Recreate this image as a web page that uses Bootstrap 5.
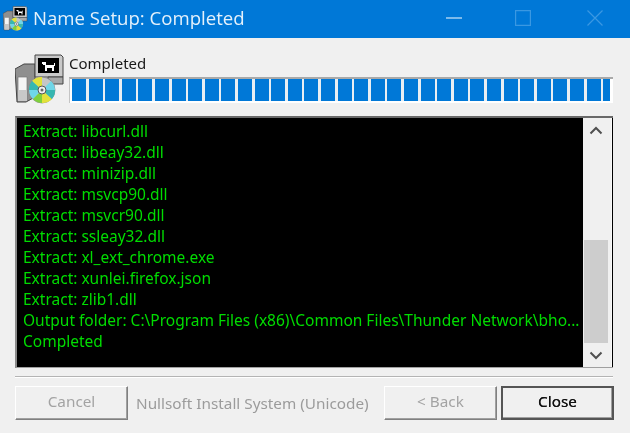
<!DOCTYPE html>
<html lang="en"><head><meta charset="utf-8"><title>Name Setup: Completed</title>
<link href="https://cdn.jsdelivr.net/npm/bootstrap@5.3.0/dist/css/bootstrap.min.css" rel="stylesheet">
<style>
html,body{width:630px;height:433px;overflow:hidden;background:#f0f0f0}
body{font-family:"Noto Sans","Liberation Sans",sans-serif;font-size:15px;color:#1a1a1a;filter:blur(.3px)}
.tbar{height:38px;background:#0078d7;color:#e4f1fb;padding-left:3px;padding-bottom:2px}
.tbar-ico{width:25px;height:26px;margin-right:5px}
.tbar-title{font-family:"Open Sans",sans-serif;font-size:18.6px}
.wctl{width:16px;height:16px;display:block}
.wctl-min{margin-right:53px}.wctl-max{margin-right:56px}.wctl-close{margin-right:27px}
.dlg{padding:14px 16px 0 15px}
.setup-ico{width:50px;height:52px;margin-right:4px;flex:none}
.stat{line-height:20px;padding-top:1px;font-size:15px;height:22px}
.pbar{height:26px;margin:3px 0 0 0;width:544px;background:#fff;border-top:2px solid #a9a9a9;border-left:1px solid #c4c4c4;padding:0 3px 2px 2px}
.pfill{height:100%;background:repeating-linear-gradient(90deg,#0078d7 0,#0078d7 14px,#e8eef3 14px,#e8eef3 16.6px)}
.logbox{height:252px;margin-top:12px;width:598px;border-top:2px solid #696969;border-left:2px solid #8a8a8a;border-bottom:1px solid #a0a0a0;background:#000}
.loglines{width:566px;background:#000;color:#00dc00;padding:3px 0 0 6px;font-size:15.500px;line-height:21px;white-space:nowrap;overflow:hidden}
.sbar{width:29px;background:#f0f0f0;border-right:1px solid #fafafa;padding:0 3px 0 1px}
.sb-btn{height:24px;display:flex;align-items:center;justify-content:center}
.sb-track{flex:1;padding-top:98px}
.sb-thumb{height:100%;background:#cdcdcd}
.sep{height:2px;margin:8px 1px 0 0;width:598px;background:#b4b4b4;border-bottom:1px solid #fff}
.foot{margin-top:8px;width:599px}
.nbtn{width:113px;height:34px;padding:0 0 3px;font-size:15.300px;font-family:inherit;color:#111;background:#f0f0f0;border:1px solid;border-color:#fff #6e6e6e #6e6e6e #fff;border-radius:0;box-shadow:inset -1px -1px 0 #a0a0a0}
.nbtn:disabled,.nbtn.disabled{color:#a3a3a3;background:#f0f0f0;border-color:#fff #808080 #808080 #fff;opacity:1}
.nbtn-def{border:2px solid;border-color:#555;color:#111;text-shadow:0 0 .4px #111}
.brand{color:#9b9b9b;font-size:15.300px;padding-left:8px;white-space:nowrap;flex:1}
.nbtn-gap{margin-left:4px}
</style></head><body>
<svg width="0" height="0" class="position-absolute">
<symbol id="inst" viewBox="15 50 50 52">
<path d="M15 67l9-5h11v33l-9 5H17z" fill="#8f8f8f" stroke="#444"/>
<path d="M18 75h9v24h-9z" fill="#f4f4f4" stroke="#777" stroke-width=".7"/>
<path d="M18 88h9v11h-9z" fill="#c8c8c8"/>
<path d="M35 53h26l2 2v20h-28z" fill="#c9c9c9" stroke="#444"/>
<path d="M38 56h21v15H38z" fill="#000"/>
<path d="M42 60h4v3h8v6h-2v-3h-5v3h-2v-6h-2v-1h-1z" fill="#fff"/>
<path d="M54 61h1v3h-1z" fill="#fff"/>
<path d="M48 75h15v7H48z" fill="#a8a8a8" stroke="#444"/>
<circle cx="42" cy="88" r="13" fill="#c6c6c6" stroke="#777" stroke-width=".7"/>
<path d="M42 88L32 79a13 13 0 0 1 10-4zM42 88l10 9a13 13 0 0 1-10 4z" fill="#e2e23a"/>
<path d="M42 88L29 88a13 13 0 0 1 3-9zM42 88L55 88a13 13 0 0 1-3 9z" fill="#37b7b0"/>
<path d="M42 88L33 97a13 13 0 0 1-4-9zM42 88L51 79a13 13 0 0 1 4 9z" fill="#6fd6e8"/>
<path d="M42 88L42 101a13 13 0 0 1-9-4z" fill="#7fd03c"/>
<circle cx="42" cy="88" r="4" fill="#eee" stroke="#555"/><circle cx="42" cy="88" r="1.500" fill="#666"/>
</symbol></svg>

<header class="tbar d-flex align-items-center">
<svg class="tbar-ico"><use href="#inst"/></svg>
<span class="tbar-title flex-grow-1">Name Setup: Completed</span>
<svg class="wctl wctl-min" viewBox="0 0 16 16"><path d="M0 8h16" stroke="#cfe6f8" stroke-width="1.200"/></svg>
<svg class="wctl wctl-max" viewBox="0 0 16 16"><path d="M.6.6h14.800v14.800H.6z" fill="none" stroke="#3a98e2" stroke-width="1.200"/></svg>
<svg class="wctl wctl-close" viewBox="0 0 16 16"><path d="M.5.5l15 15M15.500.5l-15 15" stroke="#3a98e2" stroke-width="1.200"/></svg>
</header>

<main class="dlg">
<div class="d-flex">
<svg class="setup-ico"><use href="#inst"/></svg>
<div>
<div class="stat">Completed</div>
<div class="pbar"><div class="pfill"></div></div>
</div>
</div>
<div class="logbox d-flex">
<div class="loglines">
<div>Extract: libcurl.dll</div>
<div>Extract: libeay32.dll</div>
<div>Extract: minizip.dll</div>
<div>Extract: msvcp90.dll</div>
<div>Extract: msvcr90.dll</div>
<div>Extract: ssleay32.dll</div>
<div>Extract: xl_ext_chrome.exe</div>
<div>Extract: xunlei.firefox.json</div>
<div>Extract: zlib1.dll</div>
<div>Output folder: C:\Program Files (x86)\Common Files\Thunder Network\bho...</div>
<div>Completed</div>
</div>
<div class="sbar d-flex flex-column">
<div class="sb-btn"><svg width="14" height="9" viewBox="0 0 14 9"><path d="M1.500 7.500L7 2l5.500 5.500" fill="none" stroke="#505050" stroke-width="2"/></svg></div>
<div class="sb-track"><div class="sb-thumb"></div></div>
<div class="sb-btn"><svg width="14" height="9" viewBox="0 0 14 9"><path d="M1.500 1.500L7 7l5.500-5.500" fill="none" stroke="#505050" stroke-width="2"/></svg></div>
</div>
</div>
<div class="sep"></div>
<div class="foot d-flex align-items-center">
<button class="btn nbtn" disabled>Cancel</button>
<span class="brand">Nullsoft Install System (Unicode)</span>
<button class="btn nbtn" disabled>&lt; Back</button>
<button class="btn nbtn nbtn-def nbtn-gap">Close</button>
</div>
</main>
<script src="https://cdn.jsdelivr.net/npm/bootstrap@5.3.0/dist/js/bootstrap.bundle.min.js"></script>
</body></html>
